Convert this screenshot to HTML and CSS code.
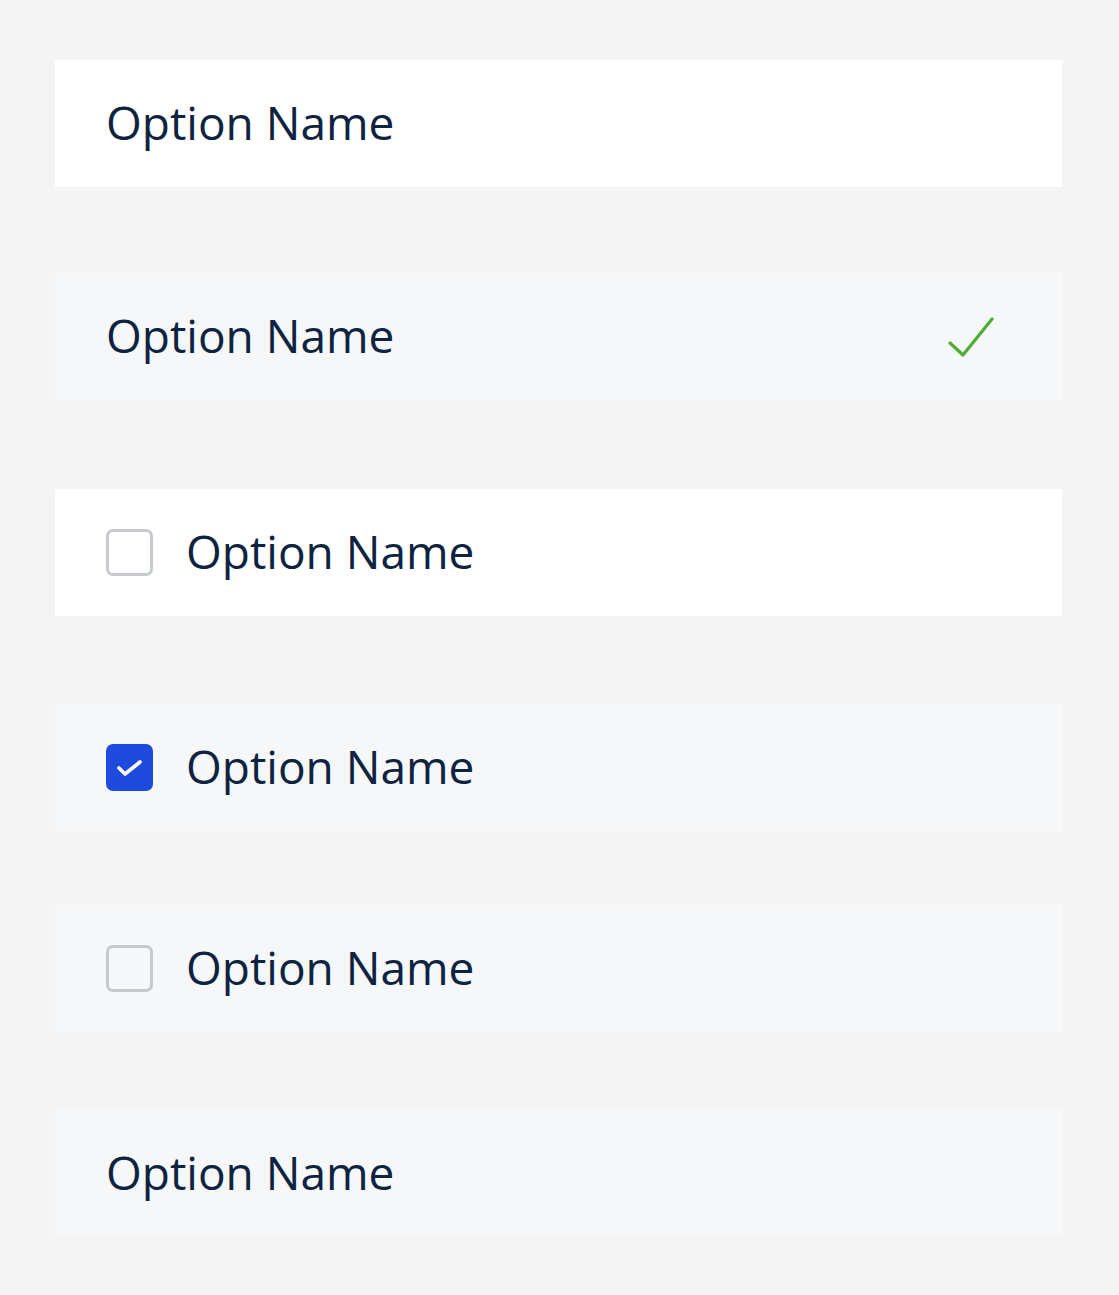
FILE: index.html
```html
<!DOCTYPE html>
<html lang="en">
<head>
  <meta charset="UTF-8">
  <meta name="viewport" content="width=device-width, initial-scale=1.0">
  <title>Option List States</title>
  <link rel="stylesheet" href="styles.css">
</head>
<body>

  <!-- Option row states -->
  <div class="option-list">

    <!-- Default -->
    <div class="option option-white">
      <span class="option-label">Option Name</span>
    </div>

    <!-- Selected, single choice -->
    <div class="option option-grey row-2">
      <span class="option-label">Option Name</span>
      <svg class="tick" width="48" height="42" viewBox="0 0 48 42">
        <polyline points="3,26 16,38 45,2" fill="none" stroke="#4caf33" stroke-width="3.2" stroke-linecap="round" stroke-linejoin="round"/>
      </svg>
    </div>

    <!-- Multi choice, unchecked -->
    <div class="option option-white row-3">
      <span class="checkbox"></span>
      <span class="option-label">Option Name</span>
    </div>

    <!-- Multi choice, checked -->
    <div class="option option-grey">
      <span class="checkbox checked">
        <svg width="28" height="18" viewBox="0 0 28 18">
          <polyline points="3,9 9,15 24,3" fill="none" stroke="#ffffff" stroke-width="3.6" stroke-linecap="round" stroke-linejoin="round"/>
        </svg>
      </span>
      <span class="option-label">Option Name</span>
    </div>

    <!-- Multi choice, hover -->
    <div class="option option-grey row-5">
      <span class="checkbox"></span>
      <span class="option-label">Option Name</span>
    </div>

    <!-- Hover -->
    <div class="option option-grey row-6">
      <span class="option-label">Option Name</span>
    </div>

  </div>

</body>
</html>
```

FILE: styles.css
```css
/* General styles */
body {
  margin: 0;
  padding: 0;
  background-color: #f4f4f4;
  font-family: "Open Sans", "Noto Sans", Arial, sans-serif;
  color: #0e2340;
}

.option-list {
  display: flex;
  flex-direction: column;
  gap: 88px;
  width: 1007px;
  padding: 60px 0 0 55px;
}

.option {
  display: flex;
  align-items: center;
  height: 127px;
  padding: 0 52px 0 51px;
  box-sizing: border-box;
}

.option-white {
  background-color: #ffffff;
}

.option-grey {
  background-color: #f5f7f9;
}

/* spacing between rows is not quite even */
.row-2 {
  margin-top: -2px;
}

.row-3 {
  margin-top: 1px;
}

.row-5 {
  margin-top: -14px;
}

.row-6 {
  margin-top: -10px;
}

.option-label {
  font-size: 46px;
  line-height: 1;
  padding-bottom: 4px;
}

.tick {
  margin-left: auto;
  margin-right: 15px;
  margin-top: 2px;
}

.checkbox {
  display: flex;
  align-items: center;
  justify-content: center;
  width: 47px;
  height: 47px;
  margin-right: 33px;
  box-sizing: border-box;
  border: 3px solid #c6c9ce;
  border-radius: 7px;
  flex-shrink: 0;
}

.checkbox.checked {
  border: none;
  background-color: #1f4ade;
}
```
